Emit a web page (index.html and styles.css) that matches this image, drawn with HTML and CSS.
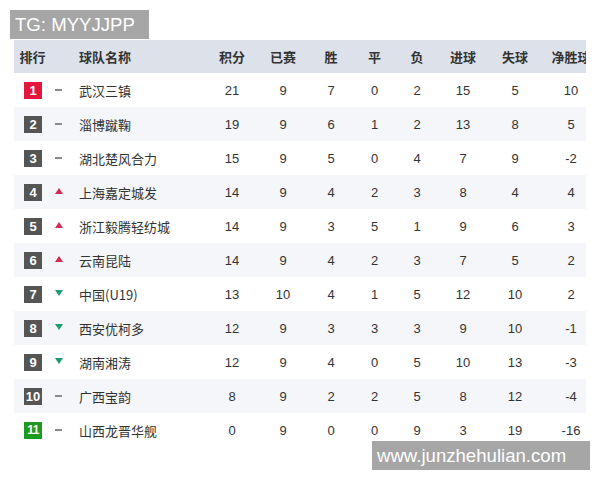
FILE: index.html
```html
<!DOCTYPE html>
<html lang="zh-CN">
<head>
<meta charset="utf-8">
<link rel="stylesheet" href="styles.css">
</head>
<body>
<div class="page">
  <div class="table">
    <div class="row head">
      <div class="c">排行</div><div></div><div class="name">球队名称</div>
      <div class="c">积分</div><div class="c">已赛</div><div class="c">胜</div><div class="c">平</div><div class="c">负</div><div class="c">进球</div><div class="c">失球</div><div class="c nw">净胜球</div>
    </div>
    <div class="row">
      <div class="c"><span class="badge red">1</span></div><div class="c"><span class="dash"></span></div><div class="name">武汉三镇</div>
      <div class="c">21</div><div class="c">9</div><div class="c">7</div><div class="c">0</div><div class="c">2</div><div class="c">15</div><div class="c">5</div><div class="c">10</div>
    </div>
    <div class="row alt">
      <div class="c"><span class="badge">2</span></div><div class="c"><span class="dash"></span></div><div class="name">淄博蹴鞠</div>
      <div class="c">19</div><div class="c">9</div><div class="c">6</div><div class="c">1</div><div class="c">2</div><div class="c">13</div><div class="c">8</div><div class="c">5</div>
    </div>
    <div class="row">
      <div class="c"><span class="badge">3</span></div><div class="c"><span class="dash"></span></div><div class="name">湖北楚风合力</div>
      <div class="c">15</div><div class="c">9</div><div class="c">5</div><div class="c">0</div><div class="c">4</div><div class="c">7</div><div class="c">9</div><div class="c">-2</div>
    </div>
    <div class="row alt">
      <div class="c"><span class="badge">4</span></div><div class="c"><span class="up"></span></div><div class="name">上海嘉定城发</div>
      <div class="c">14</div><div class="c">9</div><div class="c">4</div><div class="c">2</div><div class="c">3</div><div class="c">8</div><div class="c">4</div><div class="c">4</div>
    </div>
    <div class="row">
      <div class="c"><span class="badge">5</span></div><div class="c"><span class="up"></span></div><div class="name">浙江毅腾轻纺城</div>
      <div class="c">14</div><div class="c">9</div><div class="c">3</div><div class="c">5</div><div class="c">1</div><div class="c">9</div><div class="c">6</div><div class="c">3</div>
    </div>
    <div class="row alt">
      <div class="c"><span class="badge">6</span></div><div class="c"><span class="up"></span></div><div class="name">云南昆陆</div>
      <div class="c">14</div><div class="c">9</div><div class="c">4</div><div class="c">2</div><div class="c">3</div><div class="c">7</div><div class="c">5</div><div class="c">2</div>
    </div>
    <div class="row">
      <div class="c"><span class="badge">7</span></div><div class="c"><span class="down"></span></div><div class="name">中国(U19)</div>
      <div class="c">13</div><div class="c">10</div><div class="c">4</div><div class="c">1</div><div class="c">5</div><div class="c">12</div><div class="c">10</div><div class="c">2</div>
    </div>
    <div class="row alt">
      <div class="c"><span class="badge">8</span></div><div class="c"><span class="down"></span></div><div class="name">西安优柯多</div>
      <div class="c">12</div><div class="c">9</div><div class="c">3</div><div class="c">3</div><div class="c">3</div><div class="c">9</div><div class="c">10</div><div class="c">-1</div>
    </div>
    <div class="row">
      <div class="c"><span class="badge">9</span></div><div class="c"><span class="down"></span></div><div class="name">湖南湘涛</div>
      <div class="c">12</div><div class="c">9</div><div class="c">4</div><div class="c">0</div><div class="c">5</div><div class="c">10</div><div class="c">13</div><div class="c">-3</div>
    </div>
    <div class="row alt">
      <div class="c"><span class="badge">10</span></div><div class="c"><span class="dash"></span></div><div class="name">广西宝韵</div>
      <div class="c">8</div><div class="c">9</div><div class="c">2</div><div class="c">2</div><div class="c">5</div><div class="c">8</div><div class="c">12</div><div class="c">-4</div>
    </div>
    <div class="row">
      <div class="c"><span class="badge green">11</span></div><div class="c"><span class="dash"></span></div><div class="name">山西龙晋华舰</div>
      <div class="c">0</div><div class="c">9</div><div class="c">0</div><div class="c">0</div><div class="c">9</div><div class="c">3</div><div class="c">19</div><div class="c">-16</div>
    </div>
  </div>
  <div class="tag tag-top">TG: MYYJJPP</div>
  <div class="tag tag-bottom">www.junzhehulian.com</div>
</div>
</body>
</html>
```
FILE: styles.css
```css
html, body {
  margin: 0;
  padding: 0;
  background: #ffffff;
}
.page {
  position: relative;
  width: 600px;
  height: 480px;
  padding: 40px 0 0 14px;
  box-sizing: border-box;
  font-family: "Liberation Sans", "Noto Sans CJK SC", sans-serif;
  font-size: 13px;
  color: #333333;
}
.table {
  width: 572px;
  overflow: hidden;
}
.row {
  display: grid;
  grid-template-columns: 37px 15px 140px 52px 50px 46px 41px 44px 48px 56px 56px;
  width: 585px;
  height: 34px;
  align-items: center;
}
.row.head {
  height: 33px;
  background: #dde2ea;
  font-family: "Noto Sans CJK SC", sans-serif;
  font-weight: bold;
  font-size: 13px;
  color: #333;
}
.row.alt {
  background: #f4f6f9;
}
.c {
  text-align: center;
  display: flex;
  justify-content: center;
  align-items: center;
}
.nw { white-space: nowrap; }
.name {
  padding-left: 13px;
  font-family: "Noto Sans CJK SC", sans-serif;
  white-space: nowrap;
}
.row.head .name { padding-left: 13px; }
.badge {
  display: inline-block;
  width: 18px;
  height: 17px;
  line-height: 17px;
  background: #555555;
  color: #ffffff;
  font-weight: bold;
  font-size: 13px;
  text-align: center;
  font-family: "Liberation Sans", sans-serif;
  margin-left: 1px;
}
.badge.red { background: #e3173e; }
.badge.green { background: #1e9b1e; font-size: 12px; letter-spacing: -0.5px; }
.badge:not(.red):not(.green) { font-size: 13px; }
.dash {
  display: block;
  width: 7px;
  height: 2px;
  background: #8a8a8a;
}
.up {
  display: block;
  width: 0;
  height: 0;
  border-left: 4px solid transparent;
  border-right: 4px solid transparent;
  border-bottom: 6px solid #d62a52;
  margin-top: -3px;
}
.down {
  display: block;
  width: 0;
  height: 0;
  border-left: 4px solid transparent;
  border-right: 4px solid transparent;
  border-top: 6px solid #1f9b6e;
  margin-top: -3px;
}
.tag {
  position: absolute;
  background: #a6a6a6;
  color: #ffffff;
  font-family: "Liberation Sans", sans-serif;
  font-size: 18.6px;
  line-height: 29px;
  padding: 0 5px;
  box-sizing: border-box;
  height: 29px;
}
.tag-top {
  left: 10px;
  top: 10px;
  width: 139px;
}
.tag-bottom {
  left: 372px;
  top: 441px;
  width: 218px;
}
```
